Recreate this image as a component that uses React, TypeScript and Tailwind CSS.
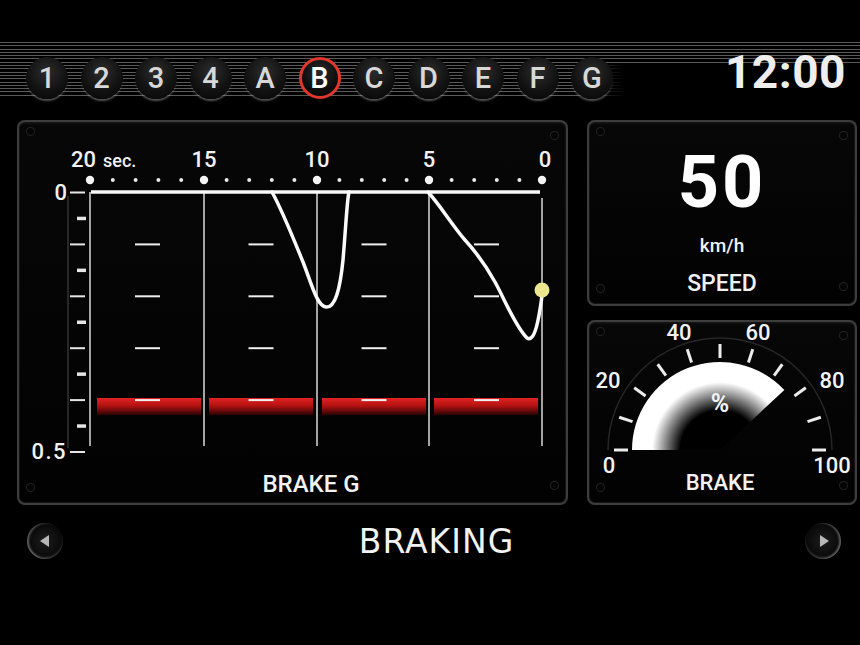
import React from "react";

const FONT = "Roboto, 'DejaVu Sans', sans-serif";

function Screw({ className }: { className: string }) {
  return (
    <div
      className={
        "absolute w-[7px] h-[7px] rounded-full bg-[#050505] shadow-[0_0_0_1px_#222] " + className
      }
    />
  );
}

function Panel({ className, children }: { className: string; children?: React.ReactNode }) {
  return (
    <div
      className={
        "relative rounded-[8px] bg-[linear-gradient(180deg,#070707,#020202)] shadow-[inset_0_0_0_2px_#3d3d3d,inset_0_0_0_3px_#141414,inset_0_3px_3px_#1e1e1e] " +
        className
      }
    >
      <Screw className="top-[8px] left-[10px]" />
      <Screw className="top-[12px] right-[10px]" />
      <Screw className="bottom-[14px] left-[10px]" />
      <Screw className="bottom-[16px] right-[10px]" />
      {children}
    </div>
  );
}

const keys = ["1", "2", "3", "4", "A", "B", "C", "D", "E", "F", "G"];

function Chart() {
  const cols = [90, 204, 317, 429, 542];
  const small: number[] = [];
  for (let i = 0; i < 4; i++) {
    const a = cols[i];
    const b = cols[i + 1];
    for (let k = 1; k < 5; k++) small.push(a + ((b - a) * k) / 5);
  }
  const ticks = Array.from({ length: 11 }, (_, k) => 192.5 + 25.95 * k);
  const rows = [244.4, 296.3, 348.2, 400.1];
  const dashX = [147.5, 261, 374, 486.5];
  const bands: [number, number][] = [
    [97, 201],
    [209, 313],
    [322, 426],
    [434, 538],
  ];
  const labels: [string, number][] = [
    ["15", 204],
    ["10", 317],
    ["5", 429],
    ["0", 545],
  ];
  return (
    <svg width={551} height={340} viewBox="17 120 551 340" className="block overflow-visible">
      <defs>
        <linearGradient id="red" x1="0" y1="0" x2="0" y2="1">
          <stop offset="0" stopColor="#e22222" />
          <stop offset="0.45" stopColor="#b51212" />
          <stop offset="1" stopColor="#2a0303" />
        </linearGradient>
      </defs>
      {bands.map(([a, b]) => (
        <rect key={a} x={a} y={398} width={b - a} height={17} fill="url(#red)" />
      ))}
      <line x1={68} y1={196} x2={68} y2={448} stroke="#333" strokeWidth={1.5} />
      {ticks.map((y, k) =>
        k % 2 === 0 ? (
          <line key={k} x1={70} y1={y} x2={85} y2={y} stroke="#e6e6e6" strokeWidth={2} />
        ) : (
          <line key={k} x1={77} y1={y} x2={86} y2={y} stroke="#e6e6e6" strokeWidth={3.5} />
        )
      )}
      {cols.map((x) => (
        <line key={x} x1={x} y1={x === 542 ? 198 : 192} x2={x} y2={446} stroke="#a3a3a3" strokeWidth={2} />
      ))}
      {rows.map((y) =>
        dashX.map((x) => (
          <line key={`${x}-${y}`} x1={x - 12.5} y1={y} x2={x + 12.5} y2={y} stroke="#f0f0f0" strokeWidth={2} />
        ))
      )}
      {cols.map((x) => (
        <circle key={`d${x}`} cx={x} cy={180} r={4.2} fill="#f4f4f4" />
      ))}
      {small.map((x) => (
        <circle key={`s${x}`} cx={x} cy={180} r={2} fill="#e8e8e8" />
      ))}
      <line x1={91} y1={192} x2={540} y2={192} stroke="#fafafa" strokeWidth={3.5} />
      <path
        d="M272 192 C 282 210, 292 235, 303 262 C 312 285, 317 306, 326 307 C 335 308, 340 290, 343 260 C 346 225, 347 200, 349 192"
        fill="none"
        stroke="#fafafa"
        strokeWidth={3.5}
        strokeLinejoin="round"
        strokeLinecap="round"
      />
      <path
        d="M428 192 C 440 205, 452 225, 465 240 C 476 252, 485 264, 495 282 C 505 300, 515 326, 527 338 C 535 343, 539 318, 542 296"
        fill="none"
        stroke="#fafafa"
        strokeWidth={3.5}
        strokeLinejoin="round"
        strokeLinecap="round"
      />
      <circle cx={542} cy={290} r={7.5} fill="#ece78e" />
      <g fontFamily={FONT} fill="#f2f2f2" fontWeight={500}>
        <text x={71} y={167} fontSize={22}>
          20
        </text>
        <text x={103} y={167} fontSize={18}>
          sec.
        </text>
        {labels.map(([t, x]) => (
          <text key={t} x={x} y={167} fontSize={22} textAnchor="middle">
            {t}
          </text>
        ))}
        <text x={67} y={200} fontSize={22} textAnchor="end">
          0
        </text>
        <text x={67} y={459} fontSize={22} textAnchor="end" letterSpacing={1.5}>
          0.5
        </text>
      </g>
    </svg>
  );
}

function Gauge() {
  const cx = 720;
  const cy = 450;
  const ticks = Array.from({ length: 11 }, (_, i) => {
    const t = ((180 - 18 * i) * Math.PI) / 180;
    return {
      x1: cx + 92 * Math.cos(t),
      y1: cy - 92 * Math.sin(t),
      x2: cx + 106 * Math.cos(t),
      y2: cy - 106 * Math.sin(t),
    };
  });
  const end = (43 * Math.PI) / 180;
  const ex = cx + 88 * Math.cos(end);
  const ey = cy - 88 * Math.sin(end);
  const nums: [string, number, number][] = [
    ["0", 609, 473],
    ["20", 608, 388],
    ["40", 679, 340],
    ["60", 758, 340],
    ["80", 832, 388],
    ["100", 832, 473],
  ];
  return (
    <svg width={270} height={185} viewBox="587 320 270 185" className="block">
      <defs>
        <radialGradient id="fillg" cx={cx} cy={cy} r={88} gradientUnits="userSpaceOnUse">
          <stop offset="0" stopColor="#000" />
          <stop offset="0.45" stopColor="#000" />
          <stop offset="0.77" stopColor="#fff" />
          <stop offset="1" stopColor="#fff" />
        </radialGradient>
      </defs>
      <path d={`M 608 450 A 112 112 0 0 1 832 450`} fill="none" stroke="#262626" strokeWidth={1.5} />
      <path d={`M 632 450 A 88 88 0 0 1 ${ex} ${ey} L ${cx} ${cy} Z`} fill="url(#fillg)" />
      {ticks.map((t, i) => (
        <line key={i} x1={t.x1} y1={t.y1} x2={t.x2} y2={t.y2} stroke="#ececec" strokeWidth={3} />
      ))}
      <g fontFamily={FONT} fill="#f2f2f2" fontWeight={500}>
        {nums.map(([t, x, y]) => (
          <text key={t} x={x} y={y} fontSize={22} textAnchor="middle">
            {t}
          </text>
        ))}
        <text x={720} y={412} fontSize={25} fontWeight={700} textAnchor="middle">
          %
        </text>
        <text x={720} y={490} fontSize={22} textAnchor="middle">
          BRAKE
        </text>
      </g>
    </svg>
  );
}

export default function App() {
  return (
    <div className="w-[860px] h-[645px] bg-black overflow-hidden flex flex-col" style={{ fontFamily: FONT }}>
      {/* Header */}
      <div className="h-[120px] pt-[42px] flex">
        <div className="w-[625px] h-[54px] bg-no-repeat [background-image:linear-gradient(to_right,transparent_575px,#000_625px),repeating-linear-gradient(to_bottom,#5a5a5a_0px,#5a5a5a_1px,transparent_1px,transparent_3.3px)] [background-size:100%_33px,100%_100%] [background-position:0_21px,0_0]">
          <div className="flex gap-[12.5px] pl-[26px] pt-[15px]">
            {keys.map((k) =>
              k === "B" ? (
                <div
                  key={k}
                  className="w-[42px] h-[42px] shrink-0 rounded-full flex items-center justify-center text-[29px] font-medium leading-none text-white border-[3px] border-[#e2372c] bg-[radial-gradient(circle_at_50%_35%,#2a2a2a_0%,#0e0e0e_60%,#050505_100%)]"
                >
                  {k}
                </div>
              ) : (
                <div
                  key={k}
                  className="w-[42px] h-[42px] shrink-0 rounded-full flex items-center justify-center text-[29px] font-medium leading-none text-[#d8d8d8] bg-[radial-gradient(circle_at_50%_35%,#2c2c2c_0%,#111_58%,#050505_100%)] shadow-[0_3px_2px_-1px_rgba(150,150,150,0.55)]"
                >
                  {k}
                </div>
              )
            )}
          </div>
        </div>
        <div className="flex-1 h-[54px] flex justify-end pr-[14px] pt-[7px] [background-image:repeating-linear-gradient(to_bottom,#5a5a5a_0px,#5a5a5a_1px,transparent_1px,transparent_3.3px)] bg-no-repeat [background-size:100%_21px]">
          <div className="text-[46px] font-bold leading-none text-[#eeeeee] tracking-[0.5px]">12:00</div>
        </div>
      </div>

      {/* Main */}
      <div className="h-[385px] flex gap-[19px] pl-[17px]">
        <Panel className="w-[551px] h-[385px] flex flex-col">
          <Chart />
          <div className="pl-[37px] mt-[12px] text-center text-[24px] font-medium leading-none text-[#f2f2f2]">
            BRAKE G
          </div>
        </Panel>
        <div className="w-[270px] flex flex-col gap-[14px]">
          <Panel className="h-[186px] flex flex-col items-center pt-[27px]">
            <div className="text-[72px] font-bold leading-none text-white tracking-[3px]">50</div>
            <div className="mt-[17px] text-[19px] font-medium leading-none text-[#f0f0f0]">km/h</div>
            <div className="mt-[17px] text-[23px] font-medium leading-none text-[#f0f0f0]">SPEED</div>
          </Panel>
          <Panel className="h-[185px]">
            <Gauge />
          </Panel>
        </div>
      </div>

      {/* Footer */}
      <div className="flex items-start pt-[18px] pl-[27px] pr-[19px]">
        <div className="w-[36px] h-[36px] rounded-full flex items-center justify-center bg-[radial-gradient(circle_at_50%_50%,#1d1d1d,#070707_72%)] shadow-[inset_2px_0_2px_rgba(200,200,200,0.4),inset_0_-2px_2px_rgba(150,150,150,0.3)]">
          <div className="w-0 h-0 border-y-[6px] border-y-transparent border-r-[9px] border-r-[#b8b8b8] mr-[2px]" />
        </div>
        <div className="flex-1 flex justify-center pl-[5px] pt-[2px]">
          <div
            className="text-[33px] leading-none text-[#f2f2f2] tracking-[1px]"
            style={{ fontFamily: "'DejaVu Sans', sans-serif" }}
          >
            BRAKING
          </div>
        </div>
        <div className="w-[36px] h-[36px] rounded-full flex items-center justify-center bg-[radial-gradient(circle_at_50%_50%,#1d1d1d,#070707_72%)] shadow-[inset_-2px_0_2px_rgba(200,200,200,0.4),inset_0_-2px_2px_rgba(150,150,150,0.3)]">
          <div className="w-0 h-0 border-y-[6px] border-y-transparent border-l-[9px] border-l-[#b8b8b8] ml-[2px]" />
        </div>
      </div>
    </div>
  );
}
